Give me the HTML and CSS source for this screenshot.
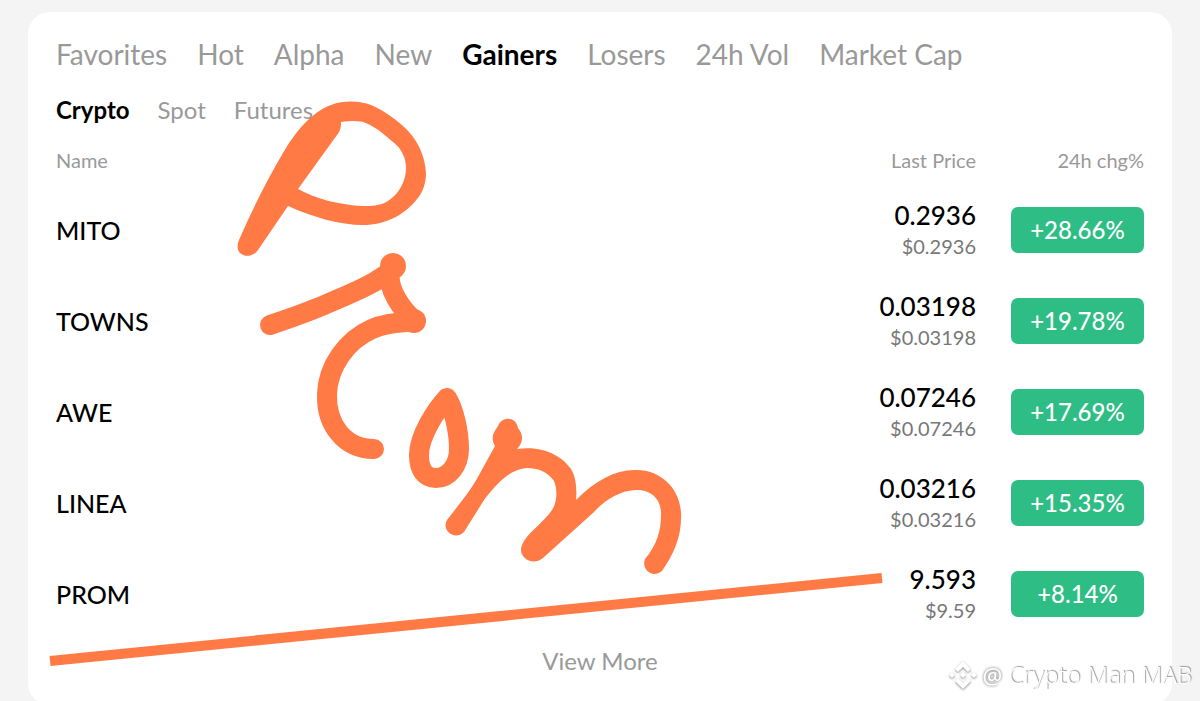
FILE: index.html
```
<!DOCTYPE html>
<html lang="en">
<head>
    <meta charset="UTF-8">
    <meta name="viewport" content="width=device-width, initial-scale=1.0">
    <title>Markets - Gainers</title>
    <link rel="stylesheet" href="styles.css">
</head>
<body>
    <main class="card">
        <nav class="tabs">
            <a href="#">Favorites</a>
            <a href="#">Hot</a>
            <a href="#">Alpha</a>
            <a href="#">New</a>
            <a href="#" class="active">Gainers</a>
            <a href="#">Losers</a>
            <a href="#">24h Vol</a>
            <a href="#">Market Cap</a>
        </nav>

        <nav class="sub-tabs">
            <a href="#" class="active">Crypto</a>
            <a href="#">Spot</a>
            <a href="#">Futures</a>
        </nav>

        <table class="market">
            <thead>
                <tr>
                    <th class="name">Name</th>
                    <th class="price">Last Price</th>
                    <th class="change">24h chg%</th>
                </tr>
            </thead>
            <tbody>
                <tr>
                    <td class="name">MITO</td>
                    <td class="price"><strong>0.2936</strong><small>$0.2936</small></td>
                    <td class="change"><span class="badge">+28.66%</span></td>
                </tr>
                <tr>
                    <td class="name">TOWNS</td>
                    <td class="price"><strong>0.03198</strong><small>$0.03198</small></td>
                    <td class="change"><span class="badge">+19.78%</span></td>
                </tr>
                <tr>
                    <td class="name">AWE</td>
                    <td class="price"><strong>0.07246</strong><small>$0.07246</small></td>
                    <td class="change"><span class="badge">+17.69%</span></td>
                </tr>
                <tr>
                    <td class="name">LINEA</td>
                    <td class="price"><strong>0.03216</strong><small>$0.03216</small></td>
                    <td class="change"><span class="badge">+15.35%</span></td>
                </tr>
                <tr>
                    <td class="name">PROM</td>
                    <td class="price"><strong>9.593</strong><small>$9.59</small></td>
                    <td class="change"><span class="badge">+8.14%</span></td>
                </tr>
            </tbody>
        </table>

        <a href="#" class="view-more">View More</a>

        <!-- Hand-drawn marker strokes over the list -->
        <svg class="scribble" viewBox="28 12 1144 694" aria-hidden="true">
            <path class="fill" fill-rule="evenodd" d="M239 240 C252 210 267 180 283 153 C294 134 311 112 331 105 C345 100 360 101 371 105 C383 110 394 118 403 126 C417 138 425 155 426 173 C426 183 423 192 417 199 C405 215 385 225 363 225 C340 225 312 217 288 206 L258 250 C254 256 246 258 240 253 C237 250 237 245 239 240 Z M341 122 C350 121 360 120 368 124 C377 128 386 136 393 142 C402 149 406 158 406 168 C406 181 399 194 388 201 C380 206 370 206 363 206 C340 205 316 199 298 189 L337 135 C341 130 341 126 341 122 Z"/>
            <path d="M270 325 C285 320 302 314 317 308 C338 299 361 290 376 281 L390 272 C387 289 402 310 415 321 C397 323 386 323 372 329 C347 340 328 366 327 394 C326 424 344 449 374 449"/>
            <circle class="fill" cx="393" cy="266" r="13"/>
            <circle class="fill" cx="414" cy="321" r="12"/>
            <path d="M447 398 C436 410 419 436 419 455 C419 470 425 478 436 478 C449 478 459 465 459 449 C459 432 454 409 447 398 Z"/>
            <!-- m, outlined as one shape where the strokes overlap -->
            <path class="fill" d="M498 426 C502 416 516 416 518 428 C524 435 523 443 517 449 C543 445 562 456 571 469 C576 477 577 489 576 500 C595 481 614 470 635 470 C660 469 680 488 681 513 C682 536 674 554 662 571 C652 579 641 569 645 559 C657 545 661 530 661 516 C662 500 652 489 635 490 C620 491 606 499 594 512 L543 558 C532 567 517 557 522 545 C526 534 544 522 552 510 C558 501 557 488 554 481 C547 471 537 468 527 468 C510 469 497 483 484 500 L464 532 C455 541 441 531 447 520 C461 502 471 490 479 475 L495 446 C490 437 494 432 498 426 Z"/>
            <path class="underline" d="M50 661 L882 578"/>
        </svg>
    </main>

    <div class="watermark">
        <svg viewBox="0 0 28 28" aria-hidden="true">
            <path d="M14 0 L22 8 L19 11 L14 6 L9 11 L6 8 Z M3 11 L6 14 L3 17 L0 14 Z M25 11 L28 14 L25 17 L22 14 Z M14 11 L17 14 L14 17 L11 14 Z M9 17 L14 22 L19 17 L22 20 L14 28 L6 20 Z"/>
        </svg>
        <span class="at">@</span>
        <span>Crypto Man MAB</span>
    </div>
</body>
</html>
```
FILE: styles.css
```
* {
    margin: 0;
    padding: 0;
    box-sizing: border-box;
}
html {
    scrollbar-width: none;
}
body {
    background-color: #f4f4f4;
    font-family: Lato, 'Open Sans', sans-serif;
    color: #000;
}
a {
    color: inherit;
    text-decoration: none;
}
.card {
    position: relative;
    margin: 12px 28px 0;
    padding: 24px 28px 26px;
    background-color: #fff;
    border-radius: 22px;
}
.tabs, .sub-tabs {
    display: flex;
    color: #999;
}
.tabs {
    gap: 30px;
    font-size: 28px;
    line-height: 36px;
}
.sub-tabs {
    gap: 28px;
    margin-top: 20px;
    font-size: 24px;
    line-height: 36px;
}
.active {
    color: #000;
    font-weight: bold;
}
.market {
    width: 100%;
    margin-top: 14px;
    border-collapse: collapse;
}
.market th {
    height: 42px;
    padding-bottom: 6px;
    font-size: 20px;
    font-weight: normal;
    color: #999;
}
.market td {
    height: 91px;
    vertical-align: middle;
}
.market .name {
    text-align: left;
}
td.name {
    font-size: 25px;
    font-weight: 500;
}
.market .price {
    text-align: right;
}
.price strong {
    display: block;
    font-size: 26px;
    line-height: 32px;
    font-weight: 500;
}
.price small {
    display: block;
    font-size: 20px;
    line-height: 30px;
    color: #777;
}
.market .change {
    width: 168px;
    text-align: right;
}
.badge {
    display: block;
    margin-left: 35px;
    background-color: #2ebd85;
    border-radius: 7px;
    color: #fff;
    font-size: 24px;
    line-height: 46px;
    font-weight: 500;
    text-align: center;
}
.view-more {
    display: block;
    margin-top: 4px;
    text-align: center;
    font-size: 24px;
    line-height: 36px;
    color: #999;
}
.scribble {
    position: absolute;
    top: 0;
    left: 0;
    width: 100%;
    pointer-events: none;
}
.scribble path {
    fill: none;
    stroke: #ff7a45;
    stroke-width: 20;
    stroke-linecap: round;
    stroke-linejoin: round;
}
.scribble .fill {
    fill: #ff7a45;
    stroke: none;
}
.scribble .underline {
    stroke-width: 10;
    stroke-linecap: butt;
}
.watermark {
    position: fixed;
    right: 8px;
    bottom: 8px;
    display: flex;
    align-items: center;
    gap: 6px;
    font-family: 'Noto Sans', sans-serif;
    font-size: 24px;
    line-height: 36px;
    font-weight: 300;
    color: #fff;
    text-shadow: 1px -1px 1px #999;
}
.watermark .at {
    font-size: 22px;
    font-weight: 500;
    text-shadow: 0 0 3px #555;
}
.watermark svg {
    width: 28px;
    height: 28px;
    fill: #fff;
    filter: drop-shadow(0 1px 1px #888);
}
```
